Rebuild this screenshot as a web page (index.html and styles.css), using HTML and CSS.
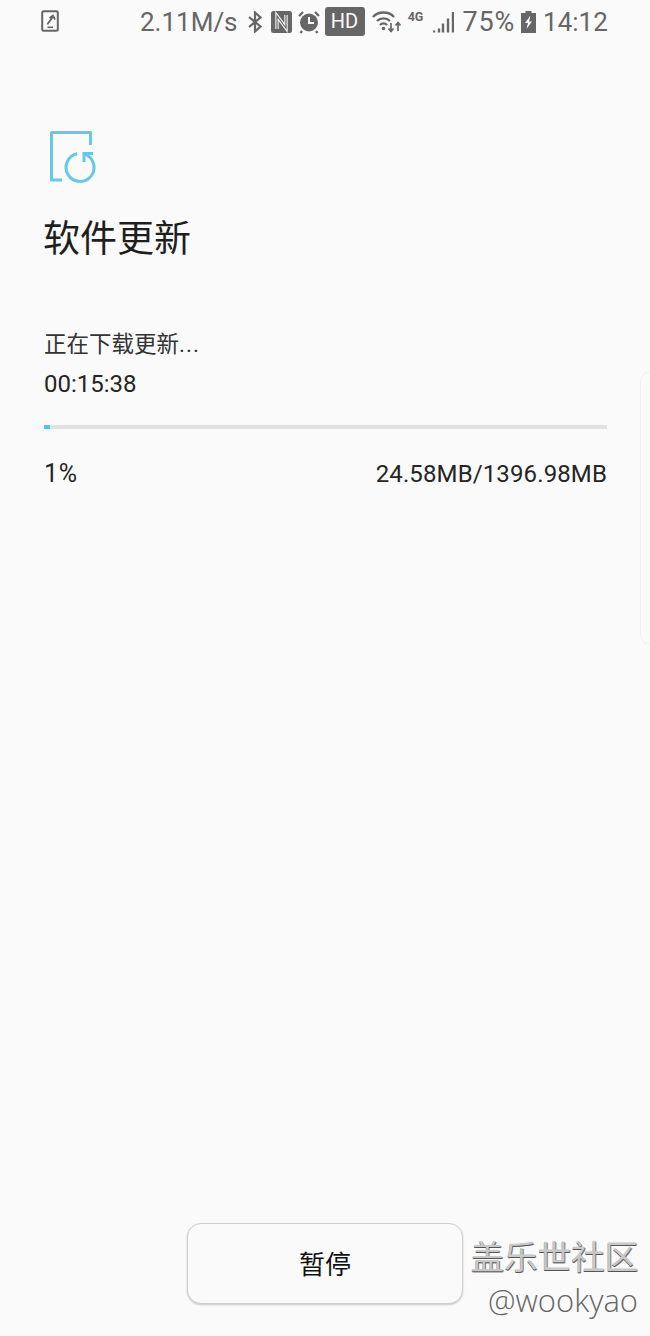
FILE: index.html
```html
<!DOCTYPE html>
<html lang="zh-CN">

<head>
    <meta charset="UTF-8">
    <meta name="viewport" content="width=device-width, initial-scale=1.0">
    <title>软件更新</title>
    <link rel="stylesheet" href="styles.css">
</head>

<body>
    <div class="page">
        <header class="status">
            <svg class="ic-screen" width="18" height="22" viewBox="0 0 18 22">
                <rect x="1.2" y="1.2" width="15.6" height="19.6" rx="1.5" fill="none" stroke="#666" stroke-width="2"/>
                <path d="M6.500 14.500 C7.500 11 10.500 11 11.500 6.500 M8.500 8 L12 5.500 L14 9.500" fill="none" stroke="#666" stroke-width="1.800"/>
                <path d="M6.500 17.300 H12" stroke="#666" stroke-width="1.600"/>
            </svg>
            <span class="speed">2.11M/s</span>
            <svg class="ic-bt" width="16" height="22" viewBox="0 0 16 22">
                <path d="M2 6 L13.500 15.500 L8 20.500 V1.500 L13.500 6.500 L2 16" fill="none" stroke="#666" stroke-width="2.200"/>
            </svg>
            <svg class="ic-nfc" width="21" height="22" viewBox="0 0 21 22">
                <rect width="21" height="22" rx="2.500" fill="#666"/>
                <path d="M6 18 V5 L15 17 V4" fill="none" stroke="#f4f4f4" stroke-width="3.400"/>
                <path d="M6 18.500 V5 L15 17 V3.500" fill="none" stroke="#666" stroke-width="1.200"/>
            </svg>
            <svg class="ic-alarm" width="22" height="24" viewBox="0 0 22 24">
                <circle cx="11" cy="12.500" r="9" fill="#666"/>
                <path d="M1 6 L5 2 M21 6 L17 2 M4 21 L2.500 23 M18 21 L19.500 23" stroke="#666" stroke-width="2.200"/>
                <path d="M11 7 V13 H16" fill="none" stroke="#fafafa" stroke-width="2"/>
            </svg>
            <span class="hd">HD</span>
            <svg class="ic-wifi" width="30" height="24" viewBox="0 0 30 24">
                <path d="M2 7 C7 1 18 1 23 7 M6 11 C9.500 7.500 15.500 7.500 19 11 M9 15 C11 13 14 13 16 15" fill="none" stroke="#666" stroke-width="2.300"/>
                <circle cx="12.500" cy="18.500" r="1.800" fill="#666"/>
                <path d="M20 13 V21 M17.500 18.500 L20 21.500 L22.500 18.500 M27 21 V13 M24.500 15.500 L27 12.500 L29.500 15.500" fill="none" stroke="#666" stroke-width="1.700"/>
            </svg>
            <span class="net">4G</span>
            <svg class="ic-signal" width="21" height="21" viewBox="0 0 21 21">
                <path d="M1 18.500 V20.500 M6 16.500 V20.500 M10 11.500 V20.500 M15 6.500 V20.500 M20 0 V20.500" stroke="#666" stroke-width="2.400"/>
            </svg>
            <span class="batt-text">75%</span>
            <svg class="ic-batt" width="15" height="22" viewBox="0 0 15 22">
                <path d="M4.500 0 H10.500 V2 H15 V22 H0 V2 H4.500 Z" fill="#666"/>
                <path d="M9.500 4.500 L4 12 H7 L5.500 18 L11 10.500 H8 Z" fill="#fafafa"/>
            </svg>
            <span class="clock">14:12</span>
        </header>

        <main class="content">
            <svg class="update-icon" width="48" height="54" viewBox="0 0 48 54">
                <path d="M41.500 15 V2.500 H2.500 V50 H13" fill="none" stroke="#68c6e8" stroke-width="3" stroke-linejoin="round"/>
                <path d="M35.500 24.200 A14 14 0 1 1 28 23.800" fill="none" stroke="#68c6e8" stroke-width="3"/>
                <path d="M44 23.500 H35 V32" fill="none" stroke="#68c6e8" stroke-width="3"/>
            </svg>
            <h1 class="title">软件更新</h1>
            <p class="state">正在下载更新<span class="dots">...</span></p>
            <p class="timer">00:15:38</p>
            <div class="track"><div class="fill"></div></div>
            <div class="nums">
                <span class="pct">1%</span>
                <span class="size">24.58MB/1396.98MB</span>
            </div>
        </main>

        <footer class="bottom">
            <button class="pause">暂停</button>
        </footer>

        <div class="edge"></div>
        <div class="mark">
            <div class="mark-name">盖乐世社区</div>
            <div class="mark-user">@wookyao</div>
        </div>
    </div>
</body>

</html>
```

FILE: styles.css
```css
* {
    margin: 0;
    padding: 0;
    box-sizing: border-box;
}

body {
    background-color: #fafafa;
    font-family: Roboto, "Noto Sans CJK SC", sans-serif;
    color: #252525;
}

.page {
    position: relative;
    height: 1336px;
    display: flex;
    flex-direction: column;
    overflow: hidden;
}

.status {
    height: 44px;
    display: flex;
    align-items: center;
    padding-left: 41px;
    color: #666;
    font-size: 26px;
}

.ic-screen {
    margin-bottom: 2px;
}

.speed {
    margin-left: 81px;
}

.ic-bt {
    margin-left: 9px;
}

.ic-nfc {
    margin-left: 8px;
}

.ic-alarm {
    margin-left: 6px;
}

.hd {
    margin-left: 5px;
    margin-bottom: 2px;
    width: 40px;
    height: 29px;
    line-height: 29px;
    border-radius: 3px;
    background-color: #666;
    color: #fafafa;
    font-size: 20px;
    text-align: center;
}

.ic-wifi {
    margin-left: 6px;
}

.net {
    align-self: flex-start;
    width: 18px;
    margin: 9px 0 0 6px;
    font-size: 12.5px;
    font-weight: 700;
    text-align: center;
}

.ic-signal {
    margin-left: 8px;
}

.batt-text {
    margin-left: 9px;
    font-size: 27px;
    letter-spacing: 0.8px;
}

.ic-batt {
    margin-left: 6px;
}

.clock {
    margin-left: 7px;
}

.content {
    padding: 86px 43px 0 44px;
}

.update-icon {
    display: block;
    margin-left: 5px;
}

.title {
    margin-top: 31px;
    margin-left: -1px;
    font-size: 37px;
    line-height: 50px;
    font-weight: 400;
    color: #1f1f1f;
}

.state {
    margin-top: 61px;
    font-size: 22.5px;
    line-height: 36px;
    color: #333;
}

.dots {
    letter-spacing: 1px;
}

.timer {
    margin-top: 4px;
    font-size: 24px;
    line-height: 36px;
}

.track {
    margin-top: 23px;
    height: 4px;
    background-color: #e3e1e0;
}

.fill {
    width: 6px;
    height: 4px;
    background-color: #55bfe6;
}

.nums {
    margin-top: 27px;
    display: flex;
    justify-content: space-between;
    font-size: 24px;
    line-height: 36px;
}

.pct {
    font-size: 25px;
    letter-spacing: 0.8px;
}

.size {
    letter-spacing: 0.12px;
}

.bottom {
    margin-top: auto;
    padding: 0 0 32px 187px;
}

.pause {
    display: block;
    width: 276px;
    height: 81px;
    padding-bottom: 2px;
    border: 1px solid #cfcfcf;
    border-radius: 14px;
    background-color: #fafafa;
    box-shadow: 0 1px 2px rgba(0, 0, 0, 0.2);
    font-family: inherit;
    font-size: 26px;
    color: #111;
}

/* handle at the right edge of the screen */
.edge {
    position: absolute;
    top: 371px;
    right: 0;
    width: 10px;
    height: 274px;
    border: 1px solid #f0f0f0;
    border-right: none;
    border-radius: 10px 0 0 10px;
}

/* watermark over the screenshot */
.mark {
    position: absolute;
    right: 12px;
    top: 1238px;
    text-align: right;
}

.mark-name {
    font-size: 33.5px;
    line-height: 40px;
    color: #c8c8c8;
    text-shadow: 0 1px 0 #555, 1px 1px 0 #888;
}

.mark-user {
    margin-top: 4px;
    font-size: 31px;
    line-height: 36px;
    font-weight: 300;
    color: #666;
    font-family: "Open Sans", sans-serif;
}
```
